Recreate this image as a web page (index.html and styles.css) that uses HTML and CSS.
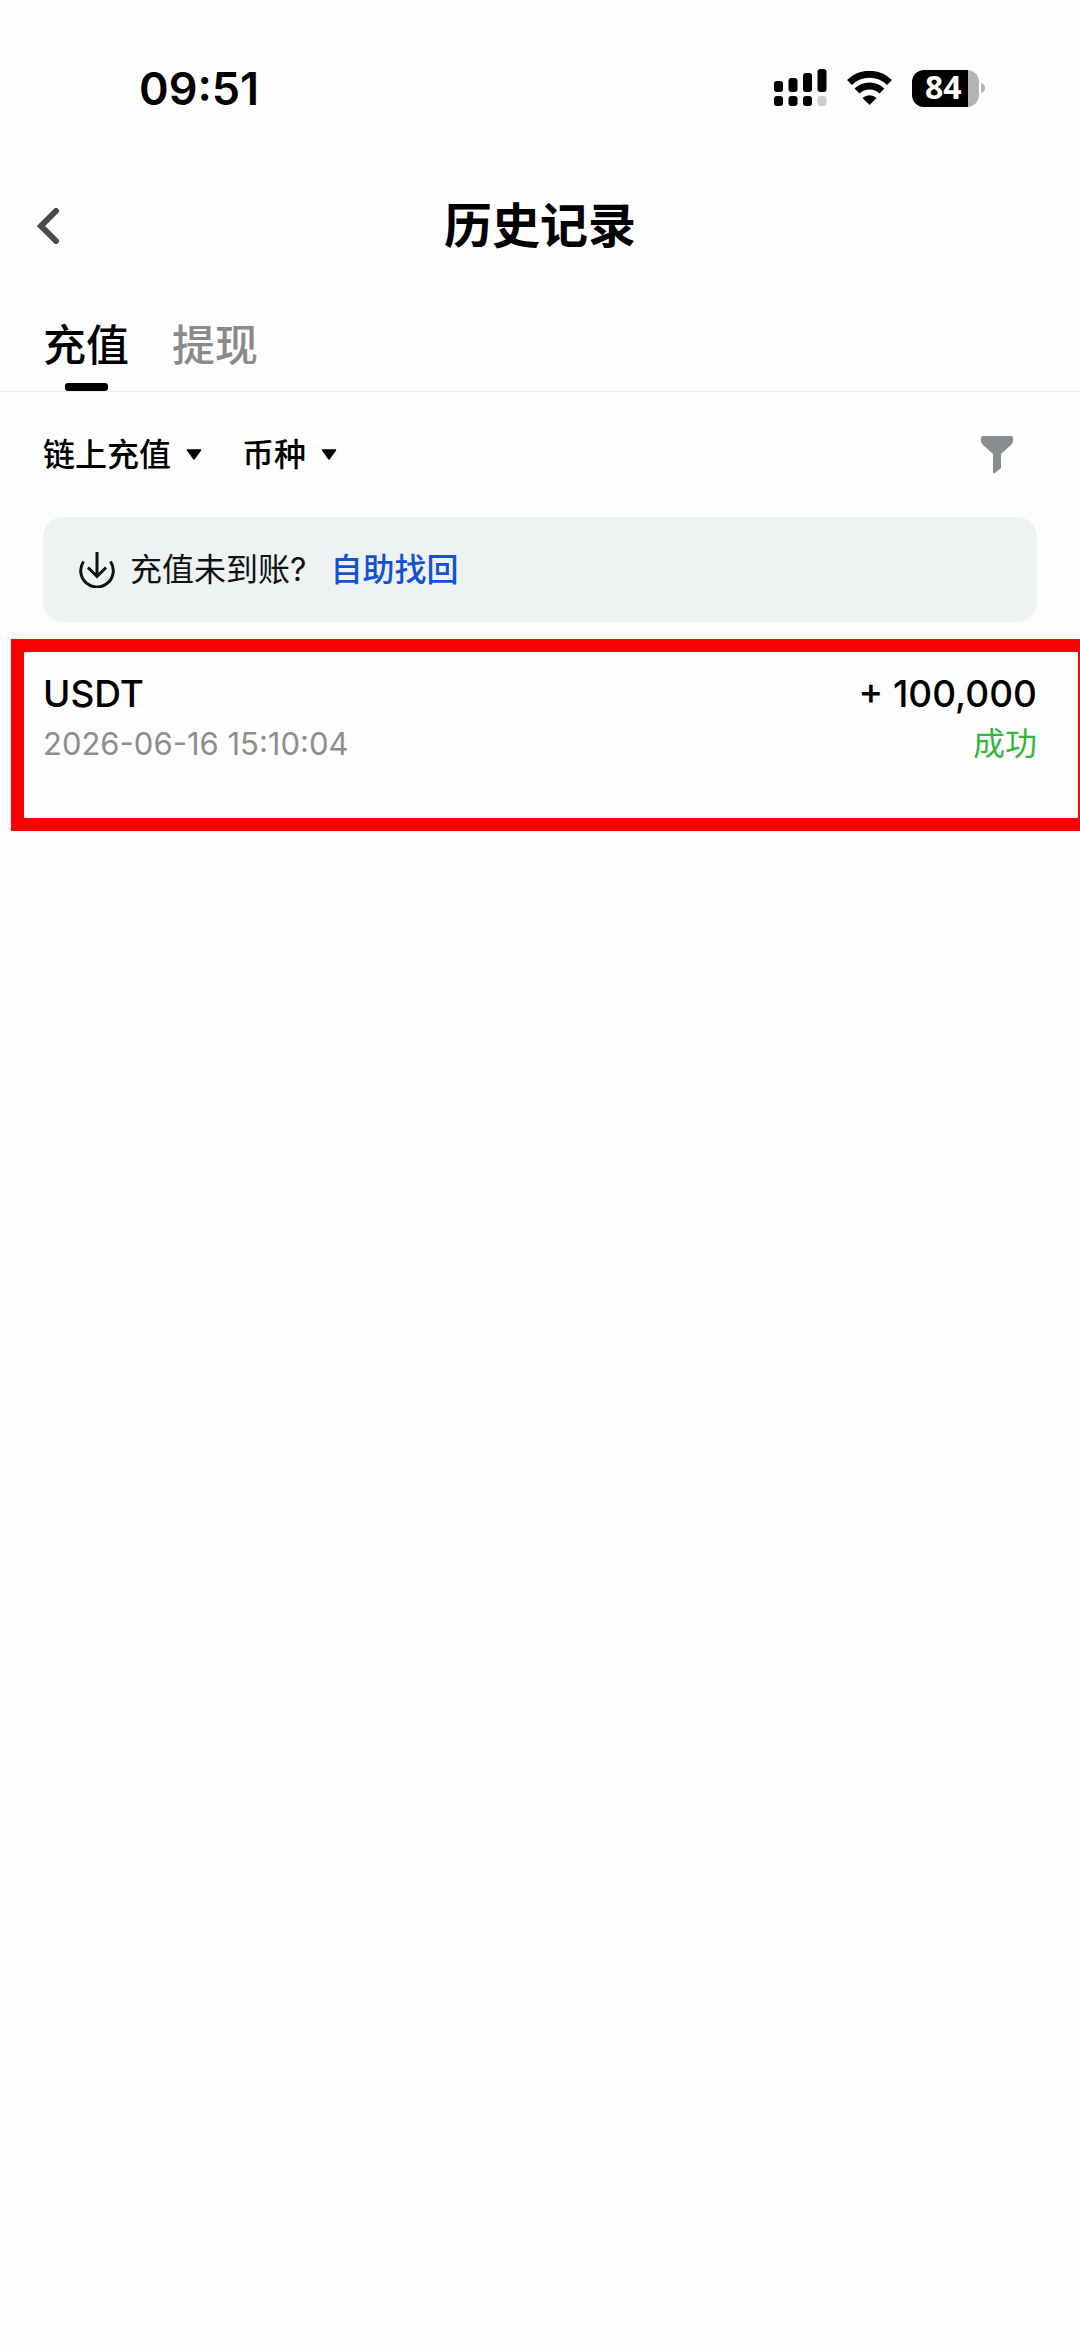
FILE: index.html
```html
<!DOCTYPE html>
<html lang="zh-CN">

<head>
    <meta charset="UTF-8">
    <meta name="viewport" content="width=device-width, initial-scale=1.0">
    <title>历史记录</title>
    <link rel="stylesheet" href="styles.css">
</head>

<body>
    <!-- Status Bar -->
    <div class="status-bar">
        <span class="status-time">09:51</span>
        <div class="status-icons">
            <svg class="icon-signal" width="53" height="38" viewBox="0 0 53 38">
                <rect x="0" y="12" width="9" height="11" rx="3" />
                <rect x="14.500" y="9" width="9" height="14" rx="3" />
                <rect x="29" y="4" width="9" height="19" rx="3" />
                <rect x="43.500" y="0" width="9" height="23" rx="3" />
                <rect x="0" y="27" width="9" height="10" rx="3" />
                <rect x="14.500" y="27" width="9" height="10" rx="3" />
                <rect x="29" y="27" width="9" height="10" rx="3" />
                <rect x="43.500" y="27" width="9" height="10" rx="3" fill="#cccccc" />
            </svg>
            <svg class="icon-wifi" width="45" height="34" viewBox="0 0 45 34">
                <path d="M2.500 11.500A28.500 28.500 0 0 1 42.500 11.500" fill="none" stroke="#000000" stroke-width="7" />
                <path d="M10 20A18 18 0 0 1 35 20" fill="none" stroke="#000000" stroke-width="7" />
                <path d="M15.500 27A10 10 0 0 1 29.500 27L22.500 34Z" />
            </svg>
            <div class="battery">
                <span class="battery-level">84</span>
                <svg class="battery-cap" width="4" height="10" viewBox="0 0 4 10">
                    <path d="M0 0Q4 1 4 5T0 10Z" fill="#b3b3b3" />
                </svg>
            </div>
        </div>
    </div>

    <!-- Header -->
    <header class="header">
        <button class="back-button" aria-label="返回">
            <svg width="24" height="36" viewBox="0 0 24 36">
                <path d="M20 3L5 18L20 33" fill="none" stroke="#4a4a4a" stroke-width="6" stroke-linecap="round" />
            </svg>
        </button>
        <h1 class="title">历史记录</h1>
    </header>

    <!-- Tabs -->
    <nav class="tabs">
        <button class="tab active">充值</button>
        <button class="tab">提现</button>
    </nav>

    <main class="container">
        <section class="filters">
            <div class="filter">
                <select class="filter-select" aria-label="充值方式">
                    <option>链上充值</option>
                </select>
                <svg class="caret" width="16" height="12" viewBox="0 0 16 12">
                    <path d="M1.500 1H14.500L8 10Z" stroke="#000000" stroke-width="1.500" stroke-linejoin="round" />
                </svg>
            </div>
            <div class="filter">
                <select class="filter-select" aria-label="币种">
                    <option>币种</option>
                </select>
                <svg class="caret" width="16" height="12" viewBox="0 0 16 12">
                    <path d="M1.500 1H14.500L8 10Z" stroke="#000000" stroke-width="1.500" stroke-linejoin="round" />
                </svg>
            </div>
            <button class="filter-button" aria-label="筛选">
                <svg width="32" height="38" viewBox="0 0 32 38">
                    <path d="M2 0H30Q32 0 32 2V5Q32 7 30 9L20 18V32L14 37Q12 38 12 36V18L2 9Q0 7 0 5V2Q0 0 2 0Z" fill="#8a8d8f" />
                </svg>
            </button>
        </section>

        <section class="notice">
            <svg class="notice-icon" width="36" height="36" viewBox="0 0 36 36" fill="none" stroke="#111111" stroke-width="3">
                <path d="M4.500 9.500A16.300 16.300 0 1 0 31.500 9.500" />
                <path d="M18 0V24M9 15.500L18 24.500L27 15.500" />
            </svg>
            <span class="notice-text">充值未到账?</span>
            <a href="#" class="notice-link">自助找回</a>
        </section>
    </main>

    <!-- Highlighted Record -->
    <section class="record">
        <div class="record-row record-main">
            <span>USDT</span>
            <span>+ 100,000</span>
        </div>
        <div class="record-row record-detail">
            <time class="record-time">2026-06-16 15:10:04</time>
            <span class="record-status">成功</span>
        </div>
    </section>
</body>

</html>
```

FILE: styles.css
```css
/* General Styles */
body {
    font-family: Inter, 'Noto Sans CJK SC', sans-serif;
    margin: 0;
    background-color: #fdfdfd;
    color: #000000;
}

button {
    padding: 0;
    border: none;
    background: none;
    font-family: inherit;
    cursor: pointer;
}

svg {
    display: block;
    flex-shrink: 0;
}

/* Status Bar */
.status-bar {
    display: flex;
    justify-content: space-between;
    align-items: center;
    height: 176px;
    padding: 0 95px 0 139px;
}

.status-time {
    font-size: 45px;
    font-weight: 600;
}

.status-icons {
    display: flex;
    align-items: center;
    gap: 20px;
}

.battery {
    display: flex;
    align-items: center;
    gap: 2px;
}

.battery-level {
    box-sizing: border-box;
    width: 67px;
    height: 37px;
    padding-left: 13px;
    border-radius: 12px;
    background: linear-gradient(to right, #000000 56px, #b3b3b3 56px);
    color: #ffffff;
    font-family: 'Noto Sans', sans-serif;
    font-size: 32px;
    font-weight: 700;
    line-height: 34px;
}

/* Header */
.header {
    position: relative;
    display: flex;
    justify-content: center;
    align-items: center;
    height: 100px;
}

/* Back arrow sits over the left end of the centered title row */
.back-button {
    position: absolute;
    left: 36px;
}

.title {
    margin: 0;
    font-size: 48px;
    font-weight: 700;
    line-height: 72px;
}

/* Tabs */
.tabs {
    display: flex;
    gap: 43px;
    height: 115px;
    padding: 0 43px;
    border-bottom: 1px solid #ececec;
}

.tab {
    display: flex;
    flex-direction: column;
    justify-content: flex-end;
    align-items: center;
    color: #8a8a8a;
    font-size: 43px;
    font-weight: 500;
    line-height: 64px;
}

.tab::after {
    content: '';
    width: 43px;
    height: 8px;
    margin-top: 6px;
    border-radius: 3px;
}

.tab.active {
    color: #000000;
}

.tab.active::after {
    background-color: #000000;
}

/* Filters */
.container {
    padding: 0 43px;
}

.filters {
    display: flex;
    align-items: center;
    gap: 40px;
    height: 125px;
}

.filter {
    display: flex;
    align-items: center;
    gap: 14px;
}

.filter-select {
    appearance: none;
    padding: 0;
    border: none;
    background: none;
    color: #000000;
    font-family: inherit;
    font-size: 32px;
    font-weight: 500;
    line-height: 48px;
}

.filter-button {
    margin-left: auto;
    margin-right: 24px;
}

/* Notice */
.notice {
    display: flex;
    align-items: center;
    height: 105px;
    padding: 0 36px;
    border-radius: 20px;
    background-color: #eef2f3;
    font-size: 32px;
    line-height: 42px;
}

.notice-text {
    margin-left: 15px;
    color: #111111;
}

.notice-link {
    margin-left: 24px;
    color: #1253d4;
    font-weight: 500;
    text-decoration: none;
}

/* Record */
.record {
    margin: 17px 0 0 11px;
    padding: 20px 41px 50px 19px;
    border: 13px solid #fe0000;
    border-right-width: 2px;
}

.record-row {
    display: flex;
    justify-content: space-between;
    align-items: center;
}

.record-main {
    font-size: 37px;
    font-weight: 500;
    line-height: 44px;
}

.record-detail {
    margin-top: 4px;
    font-size: 32px;
    line-height: 48px;
}

.record-time {
    color: #8e8e8e;
    font-size: 31px;
}

.record-status {
    color: #35b53f;
}
```
